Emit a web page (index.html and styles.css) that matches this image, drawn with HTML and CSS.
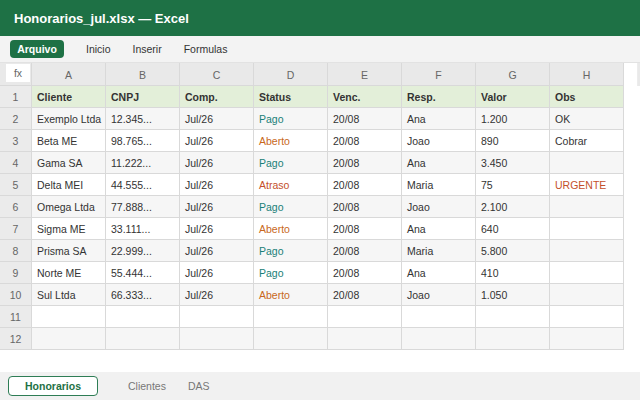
FILE: index.html
```
<!DOCTYPE html>
<html>
	<head>
		<meta charset="UTF-8">
		<title>Honorarios_jul.xlsx — Excel</title>
		<link rel="stylesheet" href="styles.css">
	</head>
	<body>
		<div class="titlebar">Honorarios_jul.xlsx — Excel</div>
		<div class="menubar">
			<a href="javascript:;" class="menu active">Arquivo</a>
			<a href="javascript:;" class="menu">Inicio</a>
			<a href="javascript:;" class="menu">Inserir</a>
			<a href="javascript:;" class="menu">Formulas</a>
		</div>
		<div class="sheet">
			<div class="row head">
				<div class="num corner"><span>fx</span></div>
				<div class="cell">A</div><div class="cell">B</div><div class="cell">C</div><div class="cell">D</div>
				<div class="cell">E</div><div class="cell">F</div><div class="cell">G</div><div class="cell">H</div>
				<div class="filler"></div>
			</div>
			<div class="row title">
				<div class="num">1</div>
				<div class="cell">Cliente</div><div class="cell">CNPJ</div><div class="cell">Comp.</div><div class="cell">Status</div>
				<div class="cell">Venc.</div><div class="cell">Resp.</div><div class="cell">Valor</div><div class="cell">Obs</div>
			</div>
			<div class="row even">
				<div class="num">2</div>
				<div class="cell">Exemplo Ltda</div><div class="cell">12.345...</div><div class="cell">Jul/26</div><div class="cell pago">Pago</div>
				<div class="cell">20/08</div><div class="cell">Ana</div><div class="cell">1.200</div><div class="cell">OK</div>
			</div>
			<div class="row">
				<div class="num">3</div>
				<div class="cell">Beta ME</div><div class="cell">98.765...</div><div class="cell">Jul/26</div><div class="cell aberto">Aberto</div>
				<div class="cell">20/08</div><div class="cell">Joao</div><div class="cell">890</div><div class="cell">Cobrar</div>
			</div>
			<div class="row even">
				<div class="num">4</div>
				<div class="cell">Gama SA</div><div class="cell">11.222...</div><div class="cell">Jul/26</div><div class="cell pago">Pago</div>
				<div class="cell">20/08</div><div class="cell">Ana</div><div class="cell">3.450</div><div class="cell"></div>
			</div>
			<div class="row">
				<div class="num">5</div>
				<div class="cell">Delta MEI</div><div class="cell">44.555...</div><div class="cell">Jul/26</div><div class="cell atraso">Atraso</div>
				<div class="cell">20/08</div><div class="cell">Maria</div><div class="cell">75</div><div class="cell atraso">URGENTE</div>
			</div>
			<div class="row even">
				<div class="num">6</div>
				<div class="cell">Omega Ltda</div><div class="cell">77.888...</div><div class="cell">Jul/26</div><div class="cell pago">Pago</div>
				<div class="cell">20/08</div><div class="cell">Joao</div><div class="cell">2.100</div><div class="cell"></div>
			</div>
			<div class="row">
				<div class="num">7</div>
				<div class="cell">Sigma ME</div><div class="cell">33.111...</div><div class="cell">Jul/26</div><div class="cell aberto">Aberto</div>
				<div class="cell">20/08</div><div class="cell">Ana</div><div class="cell">640</div><div class="cell"></div>
			</div>
			<div class="row even">
				<div class="num">8</div>
				<div class="cell">Prisma SA</div><div class="cell">22.999...</div><div class="cell">Jul/26</div><div class="cell pago">Pago</div>
				<div class="cell">20/08</div><div class="cell">Maria</div><div class="cell">5.800</div><div class="cell"></div>
			</div>
			<div class="row">
				<div class="num">9</div>
				<div class="cell">Norte ME</div><div class="cell">55.444...</div><div class="cell">Jul/26</div><div class="cell pago">Pago</div>
				<div class="cell">20/08</div><div class="cell">Ana</div><div class="cell">410</div><div class="cell"></div>
			</div>
			<div class="row even">
				<div class="num">10</div>
				<div class="cell">Sul Ltda</div><div class="cell">66.333...</div><div class="cell">Jul/26</div><div class="cell aberto">Aberto</div>
				<div class="cell">20/08</div><div class="cell">Joao</div><div class="cell">1.050</div><div class="cell"></div>
			</div>
			<div class="row">
				<div class="num">11</div>
				<div class="cell"></div><div class="cell"></div><div class="cell"></div><div class="cell"></div>
				<div class="cell"></div><div class="cell"></div><div class="cell"></div><div class="cell"></div>
			</div>
			<div class="row even">
				<div class="num">12</div>
				<div class="cell"></div><div class="cell"></div><div class="cell"></div><div class="cell"></div>
				<div class="cell"></div><div class="cell"></div><div class="cell"></div><div class="cell"></div>
			</div>
		</div>
		<div class="tabs">
			<a href="javascript:;" class="tab current">Honorarios</a>
			<a href="javascript:;" class="tab">Clientes</a>
			<a href="javascript:;" class="tab">DAS</a>
		</div>
	</body>
</html>
```

FILE: styles.css
```
*{
	margin:0px;
	padding:0px;
	box-sizing:border-box;
}
body{
	width:640px;
	height:400px;
	overflow:hidden;
	background:#fff;
	font-family:"Liberation Sans",Arial,sans-serif;
	font-size:10.5px;
	color:#333;
	display:flex;
	flex-direction:column;
}
a{
	text-decoration:none;
}
.titlebar{
	height:36px;
	background:#1e7145;
	color:#fff;
	font-size:13px;
	font-weight:bold;
	line-height:37px;
	padding-left:14px;
}
.menubar{
	height:27px;
	background:#f3f3f3;
	border-bottom:1px solid #e2e2e2;
	display:flex;
	align-items:center;
	padding-left:10px;
	gap:22px;
}
.menu{
	color:#333;
	font-size:10.5px;
	line-height:18px;
}
.menu.active{
	width:54px;
	text-align:center;
	background:#1e7145;
	color:#fff;
	font-weight:bold;
	border-radius:4px;
}
.sheet{
	display:flex;
	flex-direction:column;
}
.row{
	display:grid;
	grid-template-columns:32px repeat(8,74px);
	height:22px;
}
.row.head{
	grid-template-columns:32px repeat(8,74px) 14px;
	height:23px;
	background:#e9e9e9;
}
.cell,.num{
	border-right:1px solid #d9d9d9;
	border-bottom:1px solid #d9d9d9;
	padding-top:1px;
	line-height:21px;
	padding-left:5px;
	white-space:nowrap;
	overflow:hidden;
}
.num{
	background:#ebebeb;
	color:#666;
	text-align:center;
	padding-left:0;
}
.head .cell{
	text-align:center;
	color:#666;
	padding-left:0;
	line-height:22px;
}
.corner{
	background:#e9e9e9;
	padding:1px 1px 3px 6px;
	line-height:18px;
}
.corner span{
	display:block;
	background:#fff;
	color:#666;
	height:18px;
}
.filler{
	background:#fff;
	border-right:1px solid #ececec;
}
.title .cell{
	background:#e3efd9;
	font-weight:bold;
	color:#333;
}
.even .cell{
	background:#f6f6f6;
}
.pago{color:#1a8078;}
.aberto{color:#c8681c;}
.atraso{color:#c4502a;}
.tabs{
	margin-top:auto;
	height:28px;
	background:#f1f1f1;
	display:flex;
	align-items:center;
	padding-left:8px;
	gap:22px;
}
.tab{
	color:#777;
	font-size:10.5px;
}
.tab.current{
	width:90px;
	height:20px;
	line-height:18px;
	text-align:center;
	background:#fff;
	border:1px solid #2e7d55;
	border-radius:4px;
	color:#1e7145;
	font-weight:bold;
	margin-right:8px;
}
```
